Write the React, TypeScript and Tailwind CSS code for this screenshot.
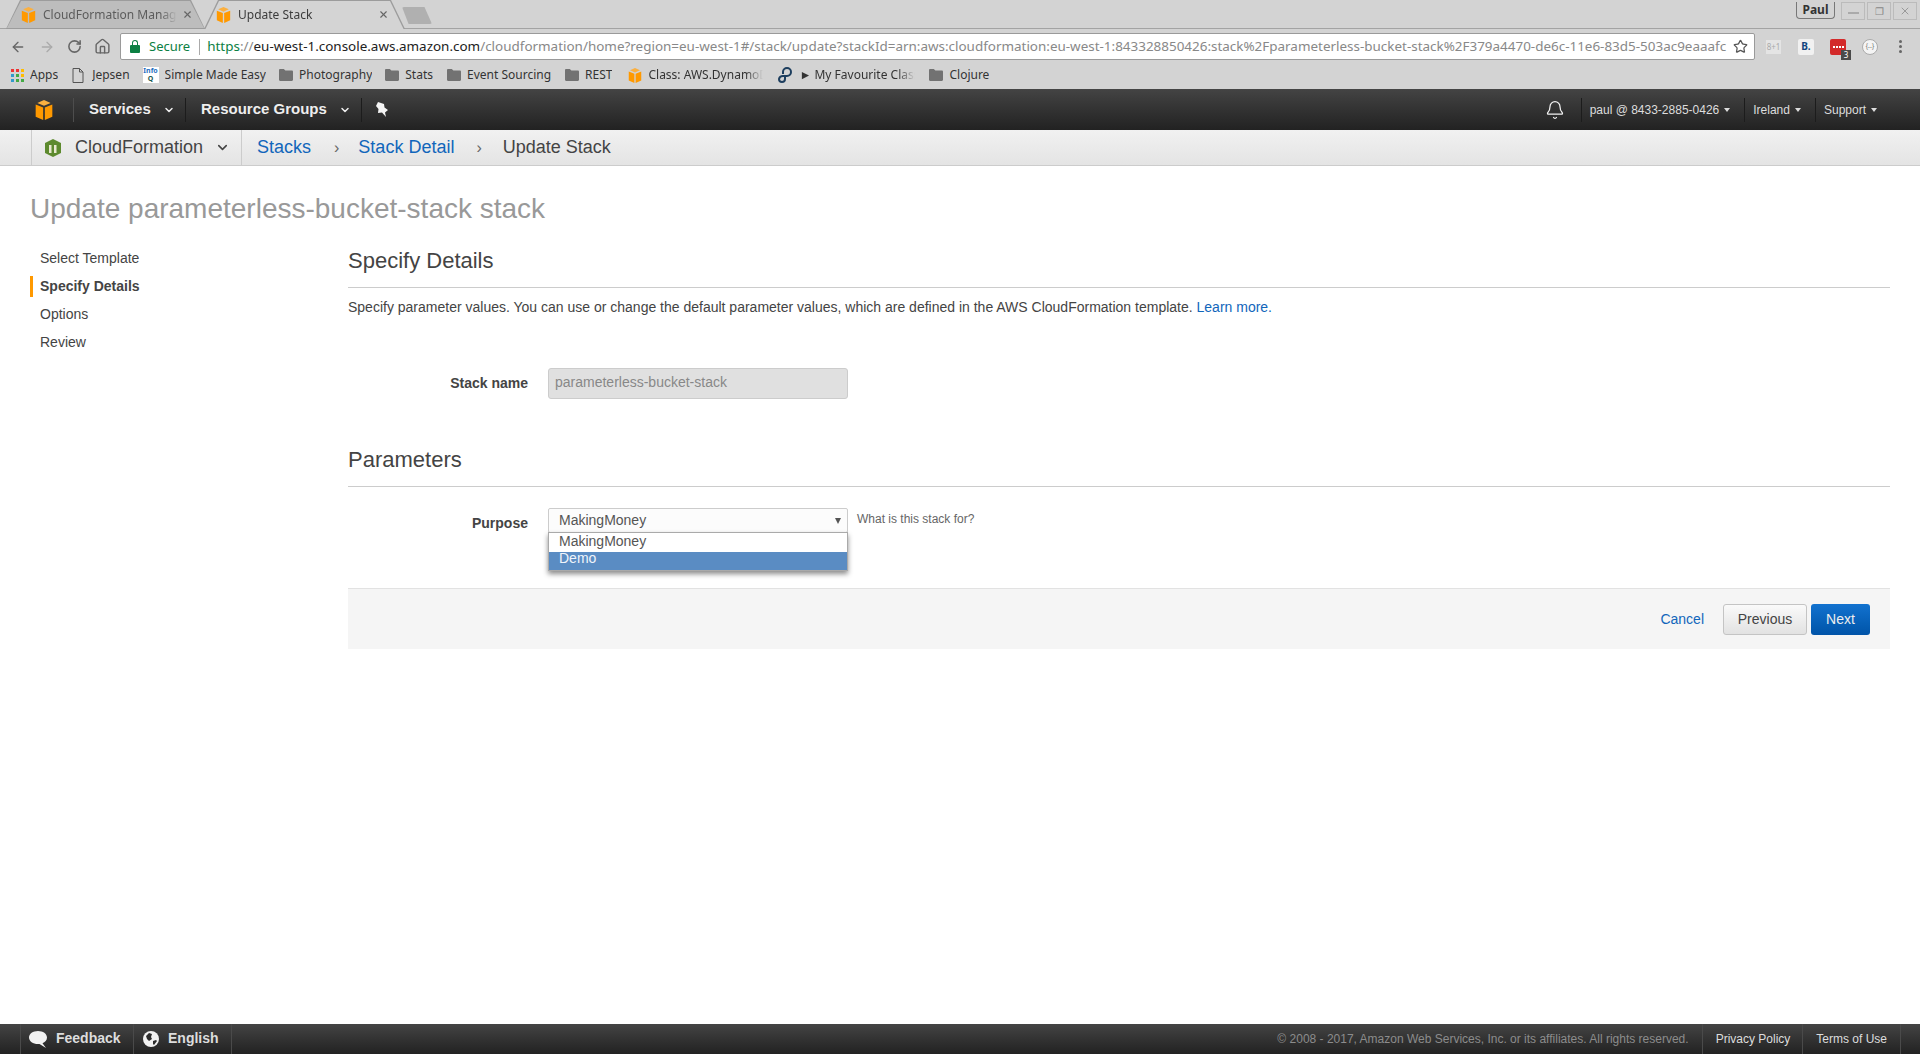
import { ArrowLeft, ArrowRight, Bell, ChevronDown, House, RotateCw, Star, X } from "lucide-react"

const chrome = "font-['Noto_Sans',sans-serif]"

function Cube({ className }: { className: string }) {
  return (
    <svg viewBox="0 0 20 24" className={className}>
      <polygon points="0,5.5 9,9 9,24 0,20" fill="#f90" />
      <polygon points="20,5.5 11,9 11,24 20,20" fill="#f90" />
      <polygon points="10,0 18,3.5 10,7 2,3.5" fill="#fbb040" />
    </svg>
  )
}

function Folder({ className }: { className: string }) {
  return (
    <svg viewBox="0 0 14 12" className={className}>
      <path d="M0 1.2C0 .5.5 0 1.2 0h3.6L6.4 1.6h6.4c.7 0 1.2.5 1.2 1.2v8c0 .7-.5 1.2-1.2 1.2H1.2C.5 12 0 11.500 0 10.800z" fill="#727272" />
    </svg>
  )
}

function Tab({ title, active, width, padding, closeClass }: { title: string; active?: boolean; width: string; padding: string; closeClass: string }) {
  return (
    <div className={`relative h-[29px] shrink-0 ${width}`}>
      <div className="absolute inset-0 bg-[#9c9c9c] [clip-path:polygon(0_100%,14px_0,calc(100%-14px)_0,100%_100%)]" />
      <div className={`absolute inset-x-[1px] top-[1px] ${active ? "bottom-[-1px] bg-[#d4d4d4]" : "bottom-[1px] bg-[#bdbdbd]"} [clip-path:polygon(0_100%,14px_0,calc(100%-14px)_0,100%_100%)]`} />
      <div className={`relative flex h-full items-center text-[12px] ${padding} ${active ? "text-[#3c3c3c]" : "text-[#5c5c5c]"}`}>
        <Cube className="h-[16px] w-[15px] shrink-0" />
        <span className="ml-[7px] w-[134px] overflow-hidden whitespace-nowrap [mask-image:linear-gradient(to_right,black_88%,transparent)]">{title}</span>
        <X size={11} strokeWidth={2.5} className={`shrink-0 text-[#666] ${closeClass}`} />
      </div>
    </div>
  )
}

function Bookmark({ label, icon, width, gap = "mr-[13px]" }: { label: string; icon: React.ReactNode; width?: string; gap?: string }) {
  return (
    <div className={`flex shrink-0 items-center gap-[6px] ${gap}`}>
      {icon}
      <span className={`overflow-hidden whitespace-nowrap text-[12px] text-[#333] ${width ? `${width} [mask-image:linear-gradient(to_right,black_85%,transparent)]` : ""}`}>{label}</span>
    </div>
  )
}

function Caret() {
  return <span className="ml-[5px] h-0 w-0 border-x-[3.500px] border-t-[4px] border-x-transparent border-t-[#ddd]" />
}

function FooterDivider() {
  return <div className="h-full w-[1px] shrink-0 bg-[#4a4a4a]" />
}

function BrowserChrome() {
  return (
    <div className={`${chrome} bg-[#d3d3d3]`}>
      <div className="relative flex h-[29px] border-b border-[#a3a3a3] pl-[6px]">
        <Tab title="CloudFormation Manag" width="w-[199px]" padding="pl-[15px]" closeClass="ml-[5px]" />
        <div className="-ml-[1px]">
          <Tab title="Update Stack" active width="w-[201px]" padding="pl-[12px]" closeClass="ml-[6px]" />
        </div>
        <div className="ml-[-3px] mt-[7px] h-[17px] w-[30px] rounded-[2px] bg-[#b0b0b0] [clip-path:polygon(0_0,75%_0,100%_100%,22%_100%)]" />
        <div className="ml-auto mr-[3px] mt-[2px] flex items-start gap-[2px]">
          <div className="mr-[4px] flex h-[17px] w-[39px] items-center justify-center rounded-b-[4px] border border-t-0 border-[#777] text-[12px] font-bold text-[#333]">Paul</div>
          <div className="flex h-[18px] w-[24px] items-center justify-center border border-[#bbb] text-[#999]"><span className="mt-[4px] h-[2px] w-[11px] bg-[#aaa]" /></div>
          <div className="flex h-[18px] w-[24px] items-center justify-center border border-[#bbb] text-[10px] text-[#888]">❐</div>
          <div className="flex h-[18px] w-[24px] items-center justify-center border border-[#bbb] text-[#999]"><X size={12} /></div>
        </div>
      </div>
      <div className="flex h-[31px] items-center pl-[10px] pt-[4px]">
        <ArrowLeft size={16} className="text-[#666]" />
        <ArrowRight size={16} className="ml-[13px] text-[#aaa]" />
        <RotateCw size={15} strokeWidth={2.5} className="ml-[12px] text-[#666]" />
        <House size={17} className="ml-[12px] text-[#666]" />
        <div className="ml-[9px] flex h-[27px] w-[1635px] items-center rounded-[2px] border border-[#9a9a9a] bg-white pl-[9px] pr-[6px] text-[13px]">
          <span className="relative mt-[4px] h-[8px] w-[10px] shrink-0 rounded-[1px] bg-[#0b8043]">
            <span className="absolute left-[2px] top-[-5px] h-[6px] w-[6px] rounded-t-[3px] border-[1.500px] border-b-0 border-[#0b8043]" />
          </span>
          <span className="ml-[9px] text-[#0b8043]">Secure</span>
          <span className="ml-[9px] h-[16px] w-[1px] bg-[#aaa]" />
          <div className="ml-[7px] w-[1520px] overflow-hidden whitespace-nowrap text-[13.45px] text-[#888]">
            <span className="text-[#0b8043]">https</span>://<span className="text-[#222]">eu-west-1.console.aws.amazon.com</span>/cloudformation/home?region=eu-west-1#/stack/update?stackId=arn:aws:cloudformation:eu-west-1:843328850426:stack%2Fparameterless-bucket-stack%2F379a4470-de6c-11e6-83d5-503ac9eaaafc
          </div>
          <Star size={15} strokeWidth={2} className="ml-auto shrink-0 text-[#555]" />
        </div>
        <div className="ml-[11px] flex h-[14px] w-[15px] items-center justify-center bg-[#e4e4e4] text-[8px] text-[#aaa]">8+1</div>
        <div className="ml-[17px] flex h-[16px] w-[16px] items-center justify-center rounded-[2px] bg-[#f1f1f1] text-[10px] font-bold text-[#12457f]">B.</div>
        <div className="relative ml-[16px] flex h-[16px] w-[16px] items-center justify-center gap-[1px] rounded-[2px] bg-[#d32a2a]">
          <span className="h-[2px] w-[2px] bg-white" />
          <span className="h-[2px] w-[2px] bg-white" />
          <span className="h-[2px] w-[2px] bg-white" />
          <span className="h-[2px] w-[2px] bg-white" />
          <span className="absolute left-[11px] top-[11px] flex h-[10px] w-[10px] items-center justify-center bg-[#4a4a4a] text-[8px] text-white">3</span>
        </div>
        <div className="ml-[16px] flex h-[16px] w-[16px] items-center justify-center rounded-full border border-[#aaa] bg-[#f4f4f4] text-[7px] text-[#777]">{"{..}"}</div>
        <div className="ml-[21px] flex flex-col gap-[2px]">
          <span className="h-[3px] w-[3px] rounded-full bg-[#666]" />
          <span className="h-[3px] w-[3px] rounded-full bg-[#666]" />
          <span className="h-[3px] w-[3px] rounded-full bg-[#666]" />
        </div>
      </div>
      <div className="flex h-[29px] items-center pl-[11px] pt-[1px]">
        <Bookmark
          label="Apps"
          gap="mr-[14px]"
          icon={
            <div className="grid h-[13px] w-[13px] grid-cols-3 gap-[2px]">
              <span className="bg-[#e33]" /><span className="bg-[#e33]" /><span className="bg-[#fb0]" />
              <span className="bg-[#39c]" /><span className="bg-[#4a4]" /><span className="bg-[#fb0]" />
              <span className="bg-[#39c]" /><span className="bg-[#4a4]" /><span className="bg-[#4a4]" />
            </div>
          }
        />
        <Bookmark
          label="Jepsen"
          gap="mr-[13px]"
          icon={
            <svg viewBox="0 0 12 15" className="mr-[2px] h-[15px] w-[12px]" fill="none" stroke="#555" strokeWidth="1">
              <path d="M1 .5h6.500L11 4v10.500H1zM7.500 .5V4H11" />
            </svg>
          }
        />
        <Bookmark
          label="Simple Made Easy"
          icon={
            <div className="flex h-[16px] w-[16px] flex-col items-center bg-white text-[7px] font-bold leading-[8px] text-[#1f70c1]">
              <span>Info</span>
              <span className="text-[#1a5a50]">Q</span>
            </div>
          }
        />
        <Bookmark label="Photography" icon={<Folder className="h-[12px] w-[14px]" />} />
        <Bookmark label="Stats" gap="mr-[14px]" icon={<Folder className="h-[12px] w-[14px]" />} />
        <Bookmark label="Event Sourcing" gap="mr-[14px]" icon={<Folder className="h-[12px] w-[14px]" />} />
        <Bookmark label="REST" gap="mr-[16px]" icon={<Folder className="h-[12px] w-[14px]" />} />
        <Bookmark label="Class: AWS.DynamoDB" width="w-[115px]" gap="mr-[14px]" icon={<Cube className="h-[15px] w-[14px]" />} />
        <Bookmark
          label="► My Favourite Classes"
          width="w-[116px]"
          gap="mr-[14px]"
          icon={
            <svg viewBox="0 0 16 16" className="h-[16px] w-[16px]" fill="none" stroke="#1d3e5e" strokeWidth="2">
              <path d="M6 7V5a4 4 0 0 1 8 0 4 4 0 0 1-4 4H6a4 4 0 0 0-4 3 3 3 0 0 0 6 0v-2" />
            </svg>
          }
        />
        <Bookmark label="Clojure" icon={<Folder className="h-[12px] w-[14px]" />} />
      </div>
    </div>
  )
}

function TopNav() {
  return (
    <div className="flex h-[41px] items-center bg-gradient-to-b from-[#444] to-[#222] text-[#eee]">
      <div className="flex h-[24px] w-[74px] shrink-0 items-center border-r border-[#4d4d4d] pl-[34px]">
        <Cube className="h-[20px] w-[20px]" />
      </div>
      <div className="flex h-[24px] w-[112px] shrink-0 items-center border-r border-[#1c1c1c] pl-[15px] text-[15px] font-bold">
        Services
        <ChevronDown size={12} strokeWidth={3} className="ml-[12px]" />
      </div>
      <div className="flex h-[24px] w-[176px] shrink-0 items-center border-r border-[#1c1c1c] pl-[15px] text-[15px] font-bold">
        Resource Groups
        <ChevronDown size={12} strokeWidth={3} className="ml-[12px]" />
      </div>
      <svg viewBox="0 0 14 16" className="ml-[13px] h-[16px] w-[14px]" fill="#f5f5f5">
        <path d="M3 0l6 2 .5 3.500L13 8l-3 2.500L11 15 7 10.500 3 11l.5-4L1 4z" />
      </svg>
      <div className="ml-auto flex h-[24px] items-center text-[12px] text-[#ddd]">
        <Bell size={20} strokeWidth={1.5} className="mr-[16px] text-[#f2f2f2]" />
        <div className="flex h-full items-center border-l border-[#1c1c1c] pl-[8px] pr-[14px]">paul @ 8433-2885-0426<Caret /></div>
        <div className="flex h-full items-center border-l border-[#1c1c1c] pl-[8px] pr-[14px]">Ireland<Caret /></div>
        <div className="flex h-full items-center border-l border-[#1c1c1c] pl-[8px] pr-[43px]">Support<Caret /></div>
      </div>
    </div>
  )
}

function SubNav() {
  return (
    <div className="flex h-[36px] items-center border-b border-[#ccc] bg-gradient-to-b from-[#f1f1f1] to-[#e4e4e4] pl-[31px] text-[18px] text-[#444]">
      <div className="flex h-full w-[211px] shrink-0 items-center border-x border-[#ccc] pl-[13px]">
        <svg viewBox="0 0 16 18" className="h-[18px] w-[16px]">
          <polygon points="8,0 16,4 16,14 8,18 0,14 0,4" fill="#5d8a2e" />
          <rect x="4" y="6" width="2.500" height="8" fill="#e8e8d0" />
          <rect x="9" y="6" width="2.500" height="8" fill="#e8e8d0" />
        </svg>
        <span className="ml-[14px]">CloudFormation</span>
        <ChevronDown size={15} strokeWidth={2.5} className="ml-[12px]" />
      </div>
      <a className="ml-[15px] text-[#1166bb]">Stacks</a>
      <span className="ml-[23px] text-[16px] text-[#666]">›</span>
      <a className="ml-[19px] text-[#1166bb]">Stack Detail</a>
      <span className="ml-[22px] text-[16px] text-[#666]">›</span>
      <span className="ml-[21px]">Update Stack</span>
    </div>
  )
}

function Steps() {
  const steps = ["Select Template", "Specify Details", "Options", "Review"]
  return (
    <div className="w-[318px] shrink-0 pt-[8px]">
      {steps.map((s) => (
        <div key={s} className="flex h-[28px] items-center">
          <span className={`h-[21px] w-[3px] ${s === "Specify Details" ? "bg-[#f90]" : ""}`} />
          <span className={`ml-[7px] text-[14px] ${s === "Specify Details" ? "font-bold text-[#444]" : "text-[#444]"}`}>{s}</span>
        </div>
      ))}
    </div>
  )
}

function Wizard() {
  return (
    <div className="min-w-0 flex-1">
      <h2 className="flex h-[52px] items-center border-b border-[#ccc] pb-[1px] text-[22px] font-normal leading-none text-[#444]">Specify Details</h2>
      <p className="mt-[9px] text-[14px] leading-[20px] text-[#444]">
        Specify parameter values. You can use or change the default parameter values, which are defined in the AWS CloudFormation template. <a className="text-[#1166bb]">Learn more.</a>
      </p>
      <div className="mt-[51px] flex items-center">
        <label className="w-[180px] text-right text-[14px] font-bold text-[#444]">Stack name</label>
        <div className="ml-[20px] flex h-[31px] w-[300px] items-center rounded-[3px] border border-[#ccc] bg-[#e0e0e0] pb-[2px] pl-[6px] text-[14px] text-[#888]">parameterless-bucket-stack</div>
      </div>
      <h2 className="mt-[44px] flex h-[44px] items-center border-b border-[#ccc] pb-[9px] text-[22px] font-normal leading-none text-[#444]">Parameters</h2>
      <div className="mt-[21px] flex h-[80px] items-start">
        <label className="mt-[5px] w-[180px] text-right text-[14px] font-bold text-[#444]">Purpose</label>
        <div className="relative ml-[20px] w-[300px]">
          <div className="flex h-[25px] items-center justify-between rounded-[2px] border border-[#ccc] bg-[#fcfcfc] pl-[10px] pr-[6px] text-[14px] text-[#555]">
            MakingMoney
            <span className="h-0 w-0 border-x-[3px] border-t-[6px] border-x-transparent border-t-[#555]" />
          </div>
          <div className="absolute left-0 top-[24px] z-10 w-full border border-[#aaa] bg-white text-[14px] shadow-[0_3px_5px_rgba(0,0,0,0.45)]">
            <div className="flex h-[19px] items-center pb-[3px] pl-[10px] text-[#555]">MakingMoney</div>
            <div className="flex h-[18px] items-center bg-[#5a8cc3] pb-[5px] pl-[10px] text-[#f0f4fa]">Demo</div>
          </div>
        </div>
        <span className="ml-[9px] mt-[2px] text-[12px] text-[#666]">What is this stack for?</span>
      </div>
      <div className="flex h-[61px] items-center justify-end border-t border-[#e2e2e2] bg-[#f5f5f5] pr-[20px] text-[14px]">
        <a className="mr-[19px] text-[#1166bb]">Cancel</a>
        <button className="h-[31px] w-[84px] rounded-[3px] border border-[#c4c4c4] bg-gradient-to-b from-[#fafafa] to-[#e2e2e2] text-[#444]">Previous</button>
        <button className="ml-[4px] h-[31px] w-[59px] rounded-[3px] bg-gradient-to-b from-[#1272cf] to-[#0154a8] text-[#eee]">Next</button>
      </div>
    </div>
  )
}

function Footer() {
  return (
    <div className="flex h-[30px] shrink-0 items-center bg-gradient-to-b from-[#444] to-[#222] pl-[20px] text-[#ddd]">
      <FooterDivider />
      <div className="flex w-[112px] items-center pl-[8px] text-[14px] font-bold">
        <svg viewBox="0 0 18 17" className="h-[17px] w-[18px]" fill="#f2f2f2">
          <path d="M9 0c5 0 9 2.800 9 6.500 0 2.700-2 4.800-4.500 5.700L17 17l-6.500-3.900H9C4 13 0 10.200 0 6.500S4 0 9 0z" />
        </svg>
        <span className="ml-[9px] -translate-y-[1px]">Feedback</span>
      </div>
      <FooterDivider />
      <div className="flex w-[97px] items-center pl-[9px] text-[14px] font-bold">
        <svg viewBox="0 0 16 16" className="h-[16px] w-[16px]">
          <circle cx="8" cy="8" r="8" fill="#f2f2f2" />
          <path d="M3 5l3-3 3 1-1 3 1 2-3 2-2-2zM10 10l3-1 1 1-3 4-1-1z" fill="#2c2c2c" />
        </svg>
        <span className="ml-[9px] -translate-y-[1px]">English</span>
      </div>
      <FooterDivider />
      <div className="ml-auto flex h-full items-center text-[12px]">
        <span className="mr-[13px] text-[#8c8c8c]">© 2008 - 2017, Amazon Web Services, Inc. or its affiliates. All rights reserved.</span>
        <FooterDivider />
        <span className="pl-[13px] pr-[12px]">Privacy Policy</span>
        <FooterDivider />
        <span className="px-[13px]">Terms of Use</span>
        <FooterDivider />
        <div className="w-[19px]" />
      </div>
    </div>
  )
}

export default function App() {
  return (
    <div className="flex h-screen flex-col overflow-hidden bg-white font-['Liberation_Sans',sans-serif]">
      <BrowserChrome />
      <TopNav />
      <SubNav />
      <div className="flex-1 px-[30px]">
        <h1 className="mt-[25px] h-[36px] text-[28px] font-normal leading-[36px] text-[#999]">Update parameterless-bucket-stack stack</h1>
        <div className="mt-[9px] flex">
          <Steps />
          <Wizard />
        </div>
      </div>
      <Footer />
    </div>
  )
}
